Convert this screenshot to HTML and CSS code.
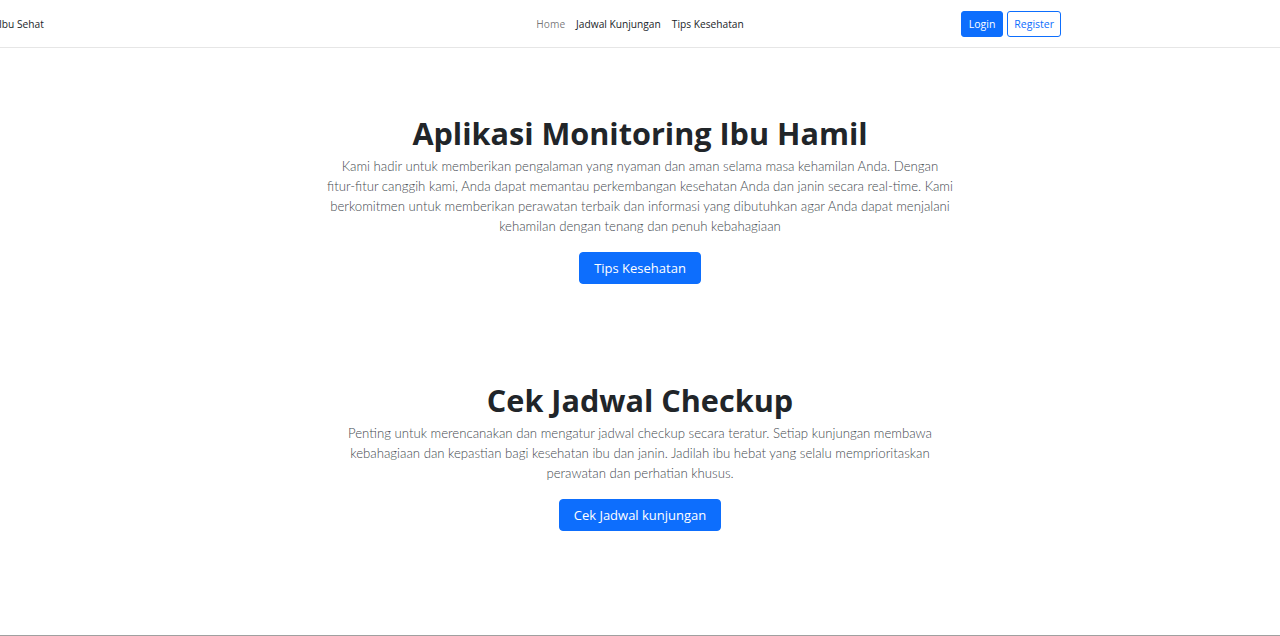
FILE: index.html
```html
<!DOCTYPE html>
<html lang="id">
<head>
<meta charset="utf-8">
<title>Ibu Sehat</title>
<link rel="stylesheet" href="styles.css">
</head>
<body>
<header class="navbar">
  <a class="brand" href="#">Ibu Sehat</a>
  <nav class="nav">
    <a class="nav-link muted" href="#">Home</a>
    <a class="nav-link" href="#">Jadwal Kunjungan</a>
    <a class="nav-link" href="#">Tips Kesehatan</a>
  </nav>
  <div class="auth">
    <a class="btn btn-primary" href="#">Login</a>
    <a class="btn btn-outline" href="#">Register</a>
  </div>
</header>
<main>
  <section class="hero hero-first">
    <h1 class="title">Aplikasi Monitoring Ibu Hamil</h1>
    <p class="lead lead-wide">Kami hadir untuk memberikan pengalaman yang nyaman dan aman selama masa kehamilan Anda. Dengan fitur-fitur canggih kami, Anda dapat memantau perkembangan kesehatan Anda dan janin secara real-time. Kami berkomitmen untuk memberikan perawatan terbaik dan informasi yang dibutuhkan agar Anda dapat menjalani kehamilan dengan tenang dan penuh kebahagiaan</p>
    <a class="btn btn-primary btn-lg" href="#">Tips Kesehatan</a>
  </section>
  <section class="hero hero-second">
    <h1 class="title">Cek Jadwal Checkup</h1>
    <p class="lead lead-narrow">Penting untuk merencanakan dan mengatur jadwal checkup secara teratur. Setiap kunjungan membawa kebahagiaan dan kepastian bagi kesehatan ibu dan janin. Jadilah ibu hebat yang selalu memprioritaskan perawatan dan perhatian khusus.</p>
    <a class="btn btn-primary btn-lg" href="#">Cek Jadwal kunjungan</a>
  </section>
</main>
</body>
</html>
```
FILE: styles.css
```css
* { box-sizing: border-box; }
html, body { margin: 0; padding: 0; }
body {
  font-family: "Open Sans", "Noto Sans", "Liberation Sans", sans-serif;
  color: #212529;
  background: #fff;
  height: 636px;
  border-bottom: 1px solid #a0a0a0;
  overflow: hidden;
}
a { text-decoration: none; }
.navbar {
  height: 48px;
  border-bottom: 1px solid #e6e6e6;
  display: grid;
  grid-template-columns: 1fr auto 1fr;
  align-items: center;
}
.brand {
  font-size: 10.2px;
  color: #212529;
  margin-left: -1px;
}
.nav { display: flex; }
.nav-link {
  font-size: 10.2px;
  color: #212529;
  padding: 0 5.5px;
}
.nav-link.muted { color: rgba(0,0,0,0.55); }
.auth {
  display: flex;
  justify-content: flex-end;
  gap: 4px;
  padding-right: 219px;
}
.btn {
  display: inline-block;
  font-size: 10.5px;
  line-height: 16px;
  padding: 4px 7px;
  border: 1px solid #0d6efd;
  border-radius: 3px;
  text-align: center;
}
.btn-primary { background: #0d6efd; color: #fff; }
.btn-outline { background: #fff; color: #0d6efd; padding: 4px 6px; }
.btn-lg {
  font-size: 13px;
  line-height: 20px;
  padding: 5px 14px;
  border-radius: 4px;
}
.hero {
  display: flex;
  flex-direction: column;
  align-items: center;
  text-align: center;
}
.hero-first { padding-top: 66px; }
.hero-second { padding-top: 97px; }
.title {
  margin: 0;
  font-size: 30.6px;
  line-height: 38px;
  font-weight: 700;
  color: #212529;
}
.lead {
  margin: 4px 0 16px;
  font-family: "Lato", "Open Sans", sans-serif;
  font-size: 13.2px;
  line-height: 20px;
  font-weight: 300;
  color: #454a50;
}
.lead-wide { max-width: 627px; }
.lead-narrow { max-width: 586px; }
```
